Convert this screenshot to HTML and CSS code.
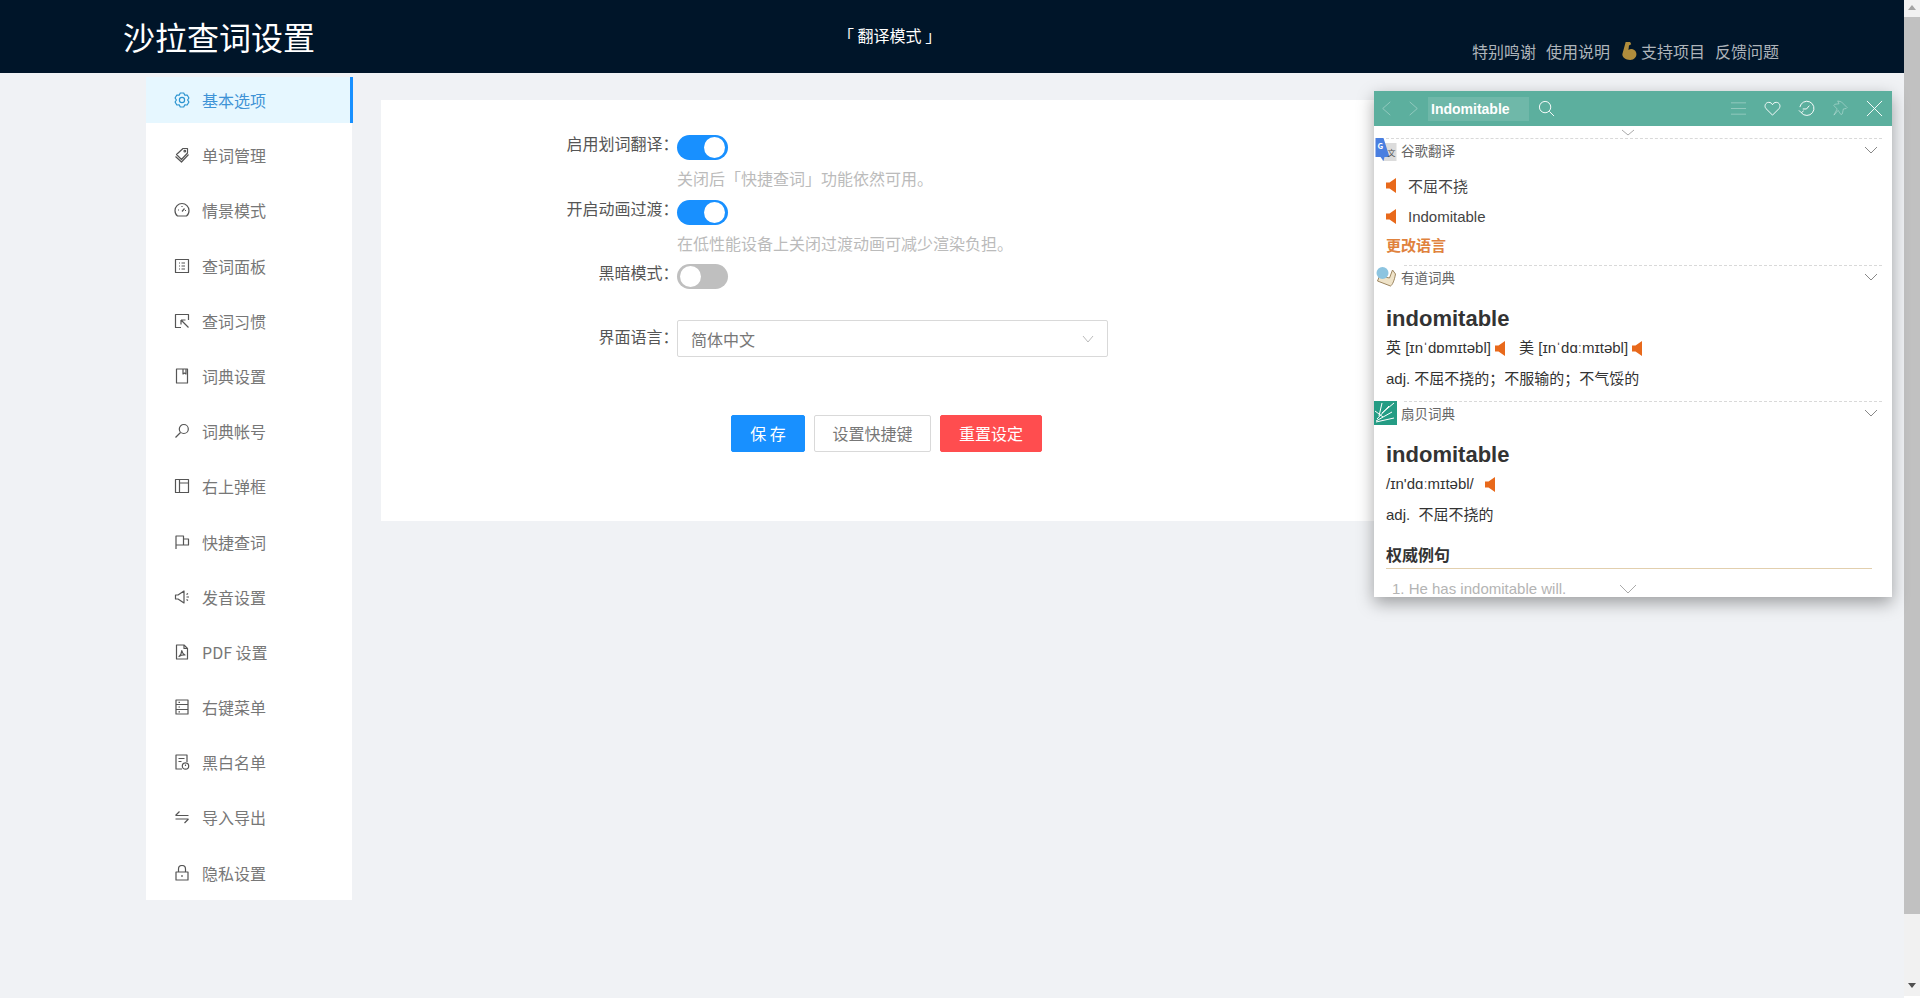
FILE: index.html
```html
<!DOCTYPE html>
<html lang="zh-CN">
<head>
    <meta charset="UTF-8">
    <meta name="viewport" content="width=device-width, initial-scale=1.0">
    <title>沙拉查词设置</title>
    <link rel="stylesheet" href="styles.css">
</head>
<body>
    <div class="page">
        <header class="topbar">
            <h1 class="topbar-title">沙拉查词设置</h1>
            <span class="topbar-mode">「 翻译模式 」</span>
            <nav class="topbar-links">
                <a>特别鸣谢</a>
                <a>使用说明</a>
                <a class="support">
                    <svg class="arm" viewBox="0 0 16 18"><path d="M5 1h4l1 2-2 1-.5 4c2-1.500 6-1 7 2.500s-2 6.500-5.500 6.500c-4 0-7-2-7-5z" fill="#b08d3c"/></svg>支持项目
                </a>
                <a>反馈问题</a>
            </nav>
        </header>

        <div class="content">
            <ul class="menu">
                <li class="menu-item active">
                    <svg class="ico" viewBox="0 0 16 16"><path d="M6.260 1.020H9.740L10.800 3.150 13.180 3 14.920 6.010 13.600 8 14.920 9.990 13.180 13 10.800 12.850 9.740 14.980H6.260L5.200 12.850 2.820 13 1.080 9.990 2.400 8 1.080 6.010 2.820 3 5.200 3.150z"/><circle cx="8" cy="8" r="2.600"/></svg>
                    基本选项
                </li>
                <li class="menu-item">
                    <svg class="ico" viewBox="0 0 16 16"><path d="M2.500 7.500L9 1.500h4.500V6L7.500 12.500z"/><circle cx="10.800" cy="4.200" r=".8"/><path d="M1.500 9.500l6 5.500 7-7.500"/></svg>
                    单词管理
                </li>
                <li class="menu-item">
                    <svg class="ico" viewBox="0 0 16 16"><path d="M3.500 14C1.800 12.800 1 10.800 1 8.500a7 7 0 0 1 14 0c0 2.300-.8 4.300-2.500 5.500z"/><path d="M8 9.500l2.500-3M4 8h1M11 8.500h1M8 4v1"/></svg>
                    情景模式
                </li>
                <li class="menu-item">
                    <svg class="ico" viewBox="0 0 16 16"><rect x="1.500" y="1.500" width="13" height="13"/><path d="M5 5h1M5 8h1M5 11h1M7.500 5h3.500M7.500 8h3.500M7.500 11h3.500"/></svg>
                    查词面板
                </li>
                <li class="menu-item">
                    <svg class="ico" viewBox="0 0 16 16"><path d="M7 14.500H1.500v-13h13V7"/><path d="M7 7l7.500 7.500M7 7v4.500M7 7h4.500"/></svg>
                    查词习惯
                </li>
                <li class="menu-item">
                    <svg class="ico" viewBox="0 0 16 16"><path d="M2.500 1h11v14h-11z"/><path d="M9 1v5l1.500-1 1.500 1V1"/></svg>
                    词典设置
                </li>
                <li class="menu-item">
                    <svg class="ico" viewBox="0 0 16 16"><circle cx="9.800" cy="6" r="4.500"/><path d="M6.500 9.500L1.500 14.500"/></svg>
                    词典帐号
                </li>
                <li class="menu-item">
                    <svg class="ico" viewBox="0 0 16 16"><rect x="1.500" y="1.500" width="13" height="13"/><path d="M5.500 1.500v13M5.500 5h9"/></svg>
                    右上弹框
                </li>
                <li class="menu-item">
                    <svg class="ico" viewBox="0 0 16 16"><path d="M2 15V2h7.500v9H2M9.500 5h5v6H7"/></svg>
                    快捷查词
                </li>
                <li class="menu-item">
                    <svg class="ico" viewBox="0 0 16 16"><path d="M1.500 6h2.500l6-4v12l-6-4H1.500zM12.500 5.500l1.500-1M12.500 8H15M12.500 10.500l1.500 1"/></svg>
                    发音设置
                </li>
                <li class="menu-item">
                    <svg class="ico" viewBox="0 0 16 16"><path d="M2.500 1h7.500l3.500 3.500V15h-11z"/><path d="M10 1v3.500h3.500M5 12.500c1.500-1 2.500-3.500 2.800-6 .5 2.500 1.500 4 3.200 4.500-2-.2-4 .2-6 1.500z"/></svg>
                    PDF 设置
                </li>
                <li class="menu-item">
                    <svg class="ico" viewBox="0 0 16 16"><rect x="2" y="1" width="12" height="14"/><path d="M2 5.500h12M2 10.500h12M4.500 3.300h1.500M4.500 8h1.500M4.500 12.800h1.500"/></svg>
                    右键菜单
                </li>
                <li class="menu-item">
                    <svg class="ico" viewBox="0 0 16 16"><path d="M8 15H2V1h11v7"/><path d="M4.500 4.500h6M4.500 7.500h3"/><circle cx="11.500" cy="12" r="3.200"/><path d="M11.500 10.500V12"/></svg>
                    黑白名单
                </li>
                <li class="menu-item">
                    <svg class="ico" viewBox="0 0 16 16"><path d="M1.500 6.500H14.500M1.500 6.500L5.500 2.500M14.500 10H1.500M14.500 10l-4 4"/></svg>
                    导入导出
                </li>
                <li class="menu-item">
                    <svg class="ico" viewBox="0 0 16 16"><rect x="2" y="7" width="12" height="8"/><path d="M4.500 7V4a3.500 3.500 0 0 1 7 0v3M8 10v2"/></svg>
                    隐私设置
                </li>
            </ul>

            <main class="card">
                <div class="form-row">
                    <label class="form-label">启用划词翻译：</label>
                    <span class="switch on"></span>
                </div>
                <p class="hint">关闭后「快捷查词」功能依然可用。</p>
                <div class="form-row">
                    <label class="form-label">开启动画过渡：</label>
                    <span class="switch on"></span>
                </div>
                <p class="hint">在低性能设备上关闭过渡动画可减少渲染负担。</p>
                <div class="form-row">
                    <label class="form-label">黑暗模式：</label>
                    <span class="switch"></span>
                </div>
                <div class="form-row lang-row">
                    <label class="form-label">界面语言：</label>
                    <div class="select">
                        简体中文
                        <svg class="select-arrow" viewBox="0 0 12 8"><path d="M1 1l5 6 5-6"/></svg>
                    </div>
                </div>
                <div class="buttons">
                    <button class="btn btn-blue">保 存</button>
                    <button class="btn btn-plain">设置快捷键</button>
                    <button class="btn btn-red">重置设定</button>
                </div>
            </main>
        </div>

        <aside class="dict">
            <div class="dict-bar">
                <svg class="bar-ico faint" viewBox="0 0 12 18"><path d="M10 2L2 9l8 7"/></svg>
                <svg class="bar-ico faint next" viewBox="0 0 12 18"><path d="M2 2l8 7-8 7"/></svg>
                <span class="dict-input">Indomitable</span>
                <svg class="bar-ico search" viewBox="0 0 18 18"><circle cx="7.500" cy="7.500" r="6"/><path d="M12 12l5 5"/></svg>
                <svg class="bar-ico faint menu-ico" viewBox="0 0 18 18"><path d="M1 3h16M1 9h16M1 15h16"/></svg>
                <svg class="bar-ico tool" viewBox="0 0 18 18"><path d="M9 16L2 9C0 6.500 1.500 2.500 5 2.500c2 0 3.200 1 4 2.500.8-1.500 2-2.500 4-2.500 3.500 0 5 4 3 6.500z"/></svg>
                <svg class="bar-ico tool" viewBox="0 0 18 18"><path d="M3.500 13.500A7.500 7.500 0 1 0 2 7.500M1 11l2.500 2.500L6 11.500M12 6L9 9.500H5"/></svg>
                <svg class="bar-ico faint tool" viewBox="0 0 18 18"><path d="M6 1l4 1 6 6-1 1-3 .5-1 5-1.500 1L6.500 11 2 16l3.500-6.500L2 6l1-1.500 4.500-.5z"/></svg>
                <svg class="bar-ico tool" viewBox="0 0 18 18"><path d="M1 1l16 16M17 1L1 17"/></svg>
            </div>
            <svg class="top-chevron" viewBox="0 0 14 8"><path d="M1 1l6 5 6-5"/></svg>

            <section class="dict-sec first">
                <div class="sec-head">
                    <svg class="sec-logo" viewBox="0 0 22 24">
                        <rect x="8" y="5" width="14" height="18" fill="#dcdcdc"/>
                        <path d="M1 0h8l6 19-5 0-1 4-3-4H1z" fill="#4a7fe0"/>
                        <text x="3" y="11" class="logo-g">G</text>
                        <text x="13" y="18" class="logo-w">文</text>
                    </svg>
                    <span>谷歌翻译</span>
                    <svg class="sec-arrow" viewBox="0 0 14 8"><path d="M1 1l6 6 6-6"/></svg>
                </div>
                <div class="sec-body google">
                    <p class="say"><svg class="horn" viewBox="0 0 10 15"><path d="M0 4.500h3.500L10 0v15l-6.500-4.500H0z"/></svg>不屈不挠</p>
                    <p class="say"><svg class="horn" viewBox="0 0 10 15"><path d="M0 4.500h3.500L10 0v15l-6.500-4.500H0z"/></svg>Indomitable</p>
                    <p class="change-lang">更改语言</p>
                </div>
            </section>

            <section class="dict-sec">
                <div class="sec-head">
                    <svg class="sec-logo" viewBox="0 0 22 24">
                        <path d="M3 16l13 5c2-1 4-6 5-12l-3-4-3 8-10-2z" fill="#efe3c8" stroke="#9c8560"/>
                        <circle cx="8" cy="8" r="6" fill="#8cc4e0"/>
                    </svg>
                    <span>有道词典</span>
                    <svg class="sec-arrow" viewBox="0 0 14 8"><path d="M1 1l6 6 6-6"/></svg>
                </div>
                <div class="sec-body youdao">
                    <p class="word">indomitable</p>
                    <p class="phon">英 [ɪnˈdɒmɪtəbl] <svg class="horn" viewBox="0 0 10 15"><path d="M0 4.500h3.500L10 0v15l-6.500-4.500H0z"/></svg><span class="phon-gap">美 [ɪnˈdɑːmɪtəbl]</span> <svg class="horn" viewBox="0 0 10 15"><path d="M0 4.500h3.500L10 0v15l-6.500-4.500H0z"/></svg></p>
                    <p class="meaning">adj. 不屈不挠的；不服输的；不气馁的</p>
                </div>
            </section>

            <section class="dict-sec">
                <div class="sec-head">
                    <svg class="sec-logo" viewBox="0 0 23 24">
                        <rect width="23" height="24" fill="#249c84"/>
                        <path d="M2 21l18-4M2 20l16-9M3 18L15 5M5 15L8 2M8 12l12-10M1 10l8 6" stroke="#fff" fill="none"/>
                    </svg>
                    <span>扇贝词典</span>
                    <svg class="sec-arrow" viewBox="0 0 14 8"><path d="M1 1l6 6 6-6"/></svg>
                </div>
                <div class="sec-body">
                    <p class="word">indomitable</p>
                    <p class="phon">/ɪn'dɑːmɪtəbl/ <svg class="horn horn-far" viewBox="0 0 10 15"><path d="M0 4.500h3.500L10 0v15l-6.500-4.500H0z"/></svg></p>
                    <p class="meaning">adj.&nbsp; 不屈不挠的</p>
                    <h3 class="sec-sub">权威例句</h3>
                    <p class="example">1. He has indomitable will.
                        <svg class="example-arrow" viewBox="0 0 18 10"><path d="M1 1l8 8 8-8"/></svg>
                    </p>
                </div>
            </section>
        </aside>
    </div>

    <div class="scrollbar">
        <span class="scroll-up"></span>
        <span class="scroll-thumb"></span>
        <span class="scroll-down"></span>
    </div>
</body>
</html>
```

FILE: styles.css
```css
* {
    margin: 0;
    padding: 0;
    box-sizing: border-box;
}

html, body {
    height: 998px;
    overflow: hidden;
}

body {
    display: flex;
    background-color: #f0f2f5;
    font-family: "Noto Sans CJK SC", "Liberation Sans", sans-serif;
    color: #555;
}

.page {
    flex: 1;
    position: relative;
}

/* top bar */
.topbar {
    height: 73px;
    background-color: #001529;
    display: flex;
    padding-left: 123px;
}

.topbar-title {
    font-size: 32px;
    font-weight: 400;
    line-height: 73px;
    color: #fff;
    width: 192px;
}

.topbar-mode {
    margin-left: 523px;
    font-size: 16px;
    line-height: 71px;
    color: #fff;
}

.topbar-links {
    margin-left: auto;
    padding: 39px 125px 0 0;
    display: flex;
    align-items: flex-start;
    gap: 9px;
    font-size: 16px;
    line-height: 24px;
    color: #aeb4ba;
}

.topbar-links a:first-child {
    margin-right: 1px;
}

.support {
    display: flex;
    align-items: center;
    height: 24px;
    margin: 0 1px 0 1px;
}

.arm {
    width: 18px;
    height: 20px;
    margin-right: 3px;
}

/* sidebar */
.content {
    display: flex;
    align-items: flex-start;
    padding: 4px 0 0 146px;
}

.menu {
    list-style: none;
    width: 206px;
    padding-bottom: 4px;
    background-color: #fff;
}

.menu-item {
    height: 46px;
    margin-bottom: 9.2px;
    padding-left: 28px;
    display: flex;
    align-items: center;
    gap: 12px;
    font-size: 16px;
    color: #777;
}

.menu-item:last-child {
    margin-bottom: 0;
}

.menu-item.active {
    width: 207px;
    background-color: #e6f7ff;
    border-right: 3px solid #1890ff;
    color: #3f93d6;
}

.ico {
    width: 16px;
    height: 16px;
    fill: none;
    stroke: #555;
    stroke-width: 1.2;
    stroke-linejoin: round;
}

.active .ico {
    stroke: #2a93d0;
}

/* form card */
.card {
    margin: 23px 0 0 29px;
    width: 1040px;
    height: 421px;
    padding-top: 35px;
    background-color: #fff;
}

.form-row {
    display: flex;
    align-items: flex-start;
    height: 25px;
}

.form-label {
    width: 297.5px;
    margin-right: -1.5px;
    text-align: right;
    font-size: 16px;
    line-height: 17px;
    color: #555;
}

.switch {
    position: relative;
    width: 51px;
    height: 25px;
    border-radius: 13px;
    background-color: #bfbfbf;
}

.switch::after {
    content: "";
    position: absolute;
    top: 2px;
    left: 3px;
    width: 21px;
    height: 21px;
    border-radius: 50%;
    background-color: #fff;
}

.switch.on {
    background-color: #1890ff;
}

.switch.on::after {
    left: 27px;
}

.hint {
    margin: 6px 0 9.5px 296px;
    font-size: 16px;
    line-height: 24px;
    color: #bbb;
}

.lang-row {
    margin-top: 31px;
    height: 37px;
    align-items: center;
}

.lang-row .form-label {
    margin-top: -4px;
}

.select {
    width: 431px;
    height: 37px;
    padding: 0 13px;
    display: flex;
    align-items: center;
    justify-content: space-between;
    border: 1px solid #d9d9d9;
    border-radius: 2px;
    font-size: 16px;
    color: #777;
}

.select-arrow {
    width: 12px;
    height: 8px;
    fill: none;
    stroke: #bbb;
}

.buttons {
    margin: 58px 0 0 350px;
    display: flex;
    gap: 9px;
}

.btn {
    height: 37px;
    padding-bottom: 2px;
    border: 1px solid #d9d9d9;
    border-radius: 2px;
    background-color: #fff;
    font-family: inherit;
    font-size: 16px;
    color: #777;
}

.btn-plain {
    width: 117px;
}

.btn-blue {
    width: 74px;
    border-color: #1890ff;
    background-color: #1890ff;
    color: #fff;
}

.btn-red {
    width: 102px;
    border-color: #ff4d4f;
    background-color: #ff4d4f;
    color: #fff;
}

/* dictionary panel */
.dict {
    position: absolute;
    top: 91px;
    left: 1374px;
    width: 518px;
    height: 506px;
    overflow: hidden;
    background-color: #fff;
    box-shadow: 0 6px 16px rgba(0, 0, 0, .35);
    font-family: "Liberation Sans", "Noto Sans CJK SC", sans-serif;
    font-size: 15px;
    color: #333;
}

.dict-bar {
    height: 35px;
    padding: 0 9px 0 4px;
    display: flex;
    align-items: center;
    background-color: #5caf9e;
}

.bar-ico {
    width: 17px;
    height: 17px;
    flex: none;
    fill: none;
    stroke: #fff;
    stroke-width: 1;
}

.bar-ico.faint {
    stroke: rgba(255, 255, 255, .35);
}

.next {
    margin-left: 10px;
}

.dict-input {
    width: 101px;
    margin-left: 6px;
    padding-left: 3px;
    background-color: rgba(255, 255, 255, .12);
    font-size: 14px;
    font-weight: 700;
    line-height: 24px;
    color: #fff;
}

.search {
    margin-left: 9px;
}

.menu-ico {
    margin-left: auto;
}

.tool {
    margin-left: 17px;
}

.top-chevron {
    display: block;
    width: 14px;
    height: 8px;
    margin: 3px 0 0 247px;
    fill: none;
    stroke: #aaa;
}

.dict-sec {
    position: relative;
}

.dict-sec::before {
    content: "";
    position: absolute;
    top: 0;
    left: 30px;
    right: 10px;
    border-top: 1px dashed #d9d9d9;
}

.dict-sec.first {
    margin-top: 1px;
}

.dict-sec.first::before {
    left: 12px;
}

.sec-head {
    height: 24px;
    display: flex;
    align-items: center;
    font-family: "Noto Sans CJK SC", sans-serif;
    font-size: 13.5px;
    color: #666;
}

.sec-logo {
    width: 23px;
    height: 24px;
    margin-right: 4px;
    flex: none;
}

.logo-g {
    font-size: 8px;
    font-weight: 700;
    fill: #fff;
}

.logo-w {
    font-size: 8px;
    fill: #555;
}

.sec-arrow {
    width: 14px;
    height: 8px;
    margin-left: auto;
    margin-right: 14px;
    fill: none;
    stroke: #888;
}

.sec-body {
    padding-left: 12px;
}

.google {
    height: 103px;
    padding-top: 8px;
}

.say {
    height: 31px;
    display: flex;
    align-items: center;
    gap: 12px;
    color: #444;
}

.horn {
    width: 10px;
    height: 15px;
    fill: #e8691b;
    vertical-align: -3px;
}

.horn-far {
    margin-left: 7px;
}

.change-lang {
    margin-top: 1px;
    font-family: "Noto Sans CJK SC", sans-serif;
    font-weight: 700;
    line-height: 24px;
    color: #e0823d;
}

.word {
    margin-top: 15px;
    font-size: 22px;
    font-weight: 700;
    line-height: 30px;
    color: #333;
}

.phon {
    margin-top: 2px;
    line-height: 24px;
    white-space: nowrap;
}

.phon-gap {
    margin-left: 14px;
}

.meaning {
    margin: 7px 0 0;
    line-height: 24px;
}

.youdao {
    padding-bottom: 10px;
}

.sec-sub {
    margin: 15px 14px 0 0;
    width: 486px;
    padding-bottom: 2px;
    border-bottom: 1px solid #e2cfae;
    font-family: "Noto Sans CJK SC", sans-serif;
    font-size: 16px;
    line-height: 24px;
}

.example {
    margin-top: 10px;
    padding-left: 6px;
    line-height: 20px;
    color: #b4b4b4;
}

.example-arrow {
    width: 18px;
    height: 10px;
    margin-left: 49px;
    fill: none;
    stroke: #aaa;
}

/* scrollbar */
.scrollbar {
    width: 16px;
    flex: none;
    height: 998px;
    padding-bottom: 2px;
    display: flex;
    flex-direction: column;
    background-color: #f1f1f1;
    border-bottom: 2px solid #fff;
}

.scroll-up {
    height: 17px;
    flex: none;
}

.scroll-up::before {
    content: "";
    display: block;
    width: 0;
    margin: 5px auto 0;
    border: 4px solid transparent;
    border-top: 0;
    border-bottom: 5px solid #a3a3a3;
}

.scroll-thumb {
    height: 897px;
    flex: none;
    background-color: #c1c1c1;
}

.scroll-down {
    margin-top: auto;
    height: 17px;
}

.scroll-down::before {
    content: "";
    display: block;
    width: 0;
    margin: 6px auto 0;
    border: 4px solid transparent;
    border-bottom: 0;
    border-top: 5px solid #505050;
}
```
